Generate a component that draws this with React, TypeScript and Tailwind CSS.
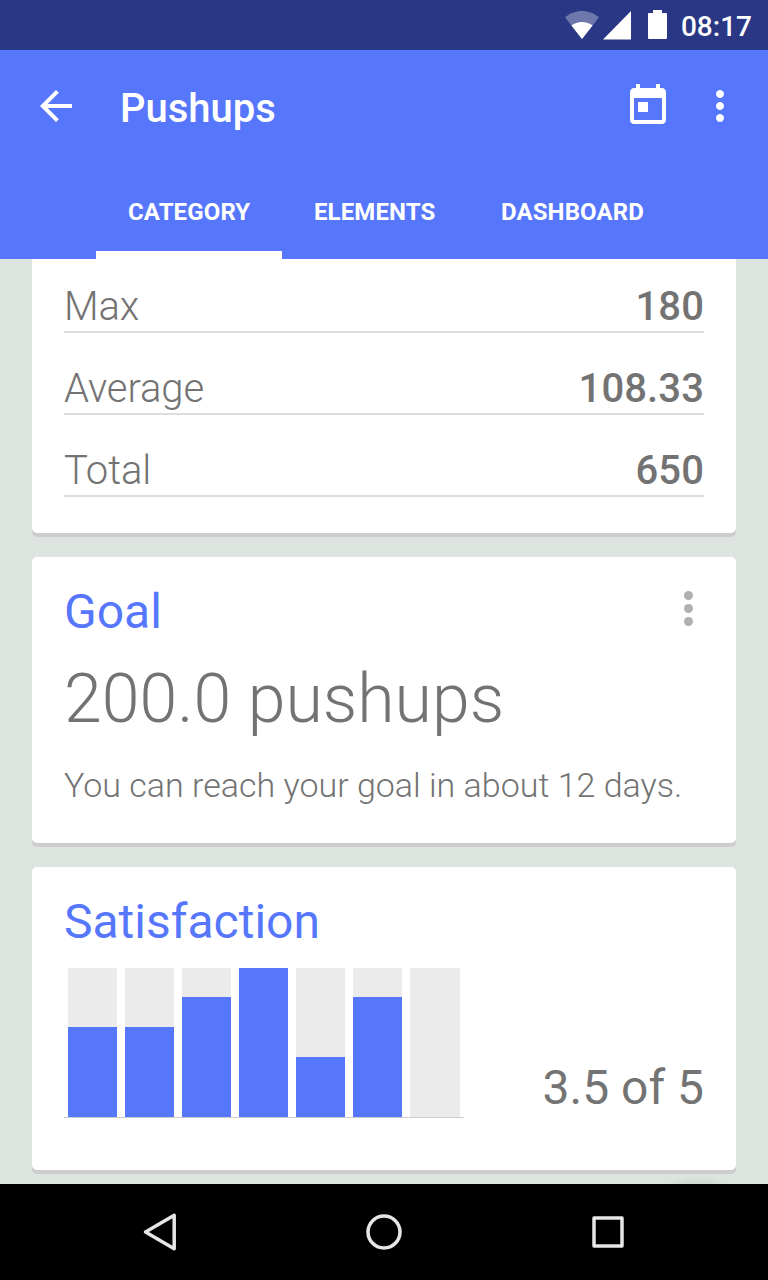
import React from 'react';

const stats = [
    { label: 'Max', value: '180' },
    { label: 'Average', value: '108.33' },
    { label: 'Total', value: '650' },
];

const tabs = [
    { name: 'CATEGORY', style: 'w-[186px] border-white' },
    { name: 'ELEMENTS', style: 'w-[187px] border-transparent' },
    { name: 'DASHBOARD', style: 'w-[207px] border-transparent' },
];

// satisfaction per entry, out of 5
const ratings = [3, 3, 4, 5, 2, 4, 0];

const StatusBar = () => (
    <div className="flex h-[50px] shrink-0 items-center justify-end bg-[#293785] pr-4 text-white">
        <svg className="mr-1 h-[50px] w-[34px]" viewBox="0 0 34 50" fill="currentColor">
            <path d="M17 39L0 17.3C4.5 13.3 10.5 11 17 11s12.500 2.300 17 6.300z" opacity="0.32" />
            <path d="M17 39L6.400 25.500C9.300 23.200 13 22 17 22s7.700 1.200 10.600 3.500z" />
        </svg>
        <svg className="mr-[17px] h-[50px] w-7" viewBox="0 0 28 50" fill="currentColor">
            <path d="M0 39.500L28 11v28.500z" />
        </svg>
        <svg className="mr-3.5 h-[50px] w-[19px]" viewBox="0 0 19 50" fill="currentColor">
            <path d="M5 10h9v3h4q1 0 1 1v24q0 1-1 1H1q-1 0-1-1V14q0-1 1-1h4z" />
        </svg>
        <span className="pt-1 text-[28px] leading-none font-medium">08:17</span>
    </div>
);

const Toolbar = () => (
    <div className="flex h-28 items-center text-white">
        <svg className="ml-8 h-12 w-12" viewBox="0 0 24 24" fill="currentColor">
            <path d="M20 11H7.830l5.590-5.590L12 4l-8 8 8 8 1.410-1.410L7.830 13H20v-2z" />
        </svg>
        <h1 className="mt-1.5 ml-10 flex-1 text-[40px] leading-none font-medium">Pushups</h1>
        <svg className="mr-6 h-12 w-12" viewBox="0 0 24 24" fill="currentColor">
            <path d="M19 3h-1V1h-2v2H8V1H6v2H5c-1.110 0-1.990.900-1.990 2L3 19c0 1.100.890 2 2 2h14c1.100 0 2-.900 2-2V5c0-1.100-.900-2-2-2zm0 16H5V8h14v11zM7 10h5v5H7z" />
        </svg>
        <svg className="mr-6 h-12 w-12" viewBox="0 0 24 24" fill="currentColor">
            <path d="M12 8c1.100 0 2-.900 2-2s-.900-2-2-2-2 .900-2 2 .900 2 2 2zm0 2c-1.100 0-2 .900-2 2s.900 2 2 2 2-.900 2-2-.900-2-2-2zm0 6c-1.100 0-2 .900-2 2s.900 2 2 2 2-.900 2-2-.900-2-2-2z" />
        </svg>
    </div>
);

const Tabs = () => (
    <div className="flex h-[97px] pl-24 text-white">
        {tabs.map((tab) => (
            <div
                key={tab.name}
                className={`flex items-center border-b-8 pt-2.5 pl-8 text-2xl font-bold tracking-[0.12px] ${tab.style}`}
            >
                {tab.name}
            </div>
        ))}
    </div>
);

const Card = ({ className, children }: { className: string; children: React.ReactNode }) => (
    <section className={`shrink-0 rounded-[5px] bg-white px-8 shadow-[0_4px_0_#cccccc] ${className}`}>
        {children}
    </section>
);

const App = () => {
    return (
        <div className="flex h-[1280px] w-[768px] flex-col overflow-hidden bg-[#dde3df] font-['Roboto',sans-serif] text-[#737373]">
            <StatusBar />
            <header className="shrink-0 bg-[#5677fc]">
                <Toolbar />
                <Tabs />
            </header>

            <main className="relative flex min-h-0 flex-1 flex-col gap-6 overflow-hidden px-8">
                <Card className="-mt-2 h-[282px]">
                    {stats.map((stat) => (
                        <div key={stat.label} className="flex h-[82px] items-end justify-between border-b-2 border-[#dddddd] text-[40px] leading-[48px]">
                            <span className="font-light tracking-[-0.1px]">{stat.label}</span>
                            <span className="font-medium tracking-[0.1px]">{stat.value}</span>
                        </div>
                    ))}
                </Card>

                <Card className="h-[286px] pt-[25px]">
                    <div className="flex justify-between">
                        <h2 className="text-5xl leading-[60px] text-[#5677fc]">Goal</h2>
                        <svg className="mt-2 mr-[11px] h-[37px] w-[9px]" viewBox="0 0 9 37" fill="#b0b0b0">
                            <circle cx="4.500" cy="5.500" r="4.500" />
                            <circle cx="4.500" cy="18.500" r="4.500" />
                            <circle cx="4.500" cy="31.500" r="4.500" />
                        </svg>
                    </div>
                    <p className="mt-[17px] text-[68px] leading-[80px] font-light">200.0 pushups</p>
                    <p className="mt-[26px] text-[34px] leading-10 font-light">You can reach your goal in about 12 days.</p>
                </Card>

                <Card className="h-[303px] pt-[25px]">
                    <h2 className="text-5xl leading-[60px] text-[#5677fc]">Satisfaction</h2>
                    <div className="mt-4 flex items-end justify-between">
                        <div className="flex h-[150px] w-[400px] gap-2 border-b border-[#cccccc] px-1">
                            {ratings.map((rating, i) => (
                                <div key={i} className="flex w-[49px] shrink-0 flex-col justify-end bg-[#ebebeb] last:w-[50px]">
                                    <div className="max-h-full bg-[#5677fc]" style={{ height: rating * 30 }} />
                                </div>
                            ))}
                        </div>
                        <span className="mb-0.5 text-5xl leading-[56px]">3.5 of 5</span>
                    </div>
                </Card>

                {/* shadow of the floating button that has slid off screen */}
                <div className="absolute -bottom-7 left-[660px] h-9 w-[76px] rounded-full bg-[radial-gradient(closest-side,rgba(0,0,0,0.14),transparent)]" />
            </main>

            <nav className="flex h-24 shrink-0 items-center justify-center gap-44 bg-black">
                <svg className="h-12 w-12" viewBox="0 0 48 48" fill="none" stroke="#e6e6e6" strokeWidth="3.500" strokeLinejoin="round">
                    <path d="M9.500 24L38.200 7.300v33.400z" />
                </svg>
                <svg className="h-12 w-12" viewBox="0 0 48 48" fill="none" stroke="#e6e6e6" strokeWidth="3.500">
                    <circle cx="24" cy="24" r="16" />
                </svg>
                <svg className="h-12 w-12" viewBox="0 0 48 48" fill="none" stroke="#e6e6e6" strokeWidth="3.500" strokeLinejoin="round">
                    <path d="M10 10h28v28H10z" />
                </svg>
            </nav>
        </div>
    );
};

export default App;
